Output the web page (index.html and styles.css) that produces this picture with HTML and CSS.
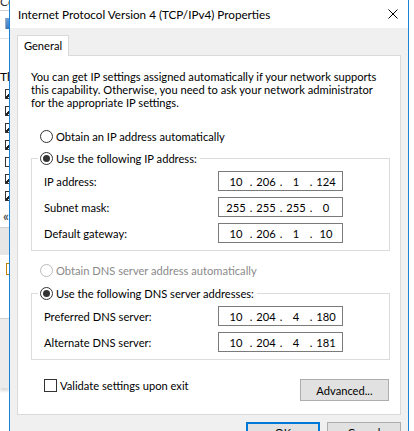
FILE: index.html
```html
<!DOCTYPE html>
<html>
<head>
<meta charset="utf-8">
<link rel="stylesheet" href="styles.css">
</head>
<body>
<div class="screen">
  <div class="bgwin">
    <div class="bw-top">Co</div>
    <div class="bw-line"></div>
    <div class="bw-icon"></div>
    <div class="bw-line2"></div>
    <div class="bw-th">Th</div>
    <div class="bw-list">
      <span class="bw-cb on"></span>
      <span class="bw-cb on"></span>
      <span class="bw-cb on"></span>
      <span class="bw-cb on"></span>
      <span class="bw-cb"></span>
      <span class="bw-cb on"></span>
      <span class="bw-cb on"></span>
    </div>
    <div class="bw-arrow">&laquo;</div>
    <div class="bw-band"></div>
    <div class="bw-bracket"></div>
    <div class="bw-grey"></div>
  </div>

  <div class="dialog">
    <div class="titlebar">
      <span class="title">Internet Protocol Version 4 (TCP/IPv4) Properties</span>
      <svg class="close" width="10" height="10" viewBox="0 0 10 10"><path d="M0.5 0.5L9.5 9.5M9.5 0.5L0.5 9.5" stroke="#000" stroke-width="1" fill="none"/></svg>
    </div>
    <div class="body">
      <div class="tabs"><div class="tab">General</div></div>
      <div class="panel">
        <p class="intro">You can get IP settings assigned automatically if your network supports<br>this capability. Otherwise, you need to ask your network administrator<br>for the appropriate IP settings.</p>

        <div class="opt opt-first"><span class="radio"></span><span>Obtain an IP address automatically</span></div>

        <fieldset class="group group-ip">
          <legend><span class="opt"><span class="radio on"></span><span>Use the following IP address:</span></span></legend>
          <div class="field"><span>IP address:</span>
            <div class="ip"><span>10</span><i>.</i><span>206</span><i>.</i><span>1</span><i>.</i><span>124</span></div></div>
          <div class="field"><span>Subnet mask:</span>
            <div class="ip"><span>255</span><i>.</i><span>255</span><i>.</i><span>255</span><i>.</i><span>0</span></div></div>
          <div class="field"><span>Default gateway:</span>
            <div class="ip"><span>10</span><i>.</i><span>206</span><i>.</i><span>1</span><i>.</i><span>10</span></div></div>
        </fieldset>

        <div class="opt opt-disabled"><span class="radio"></span><span>Obtain DNS server address automatically</span></div>

        <fieldset class="group group-dns">
          <legend><span class="opt"><span class="radio on"></span><span>Use the following DNS server addresses:</span></span></legend>
          <div class="field"><span>Preferred DNS server:</span>
            <div class="ip"><span>10</span><i>.</i><span>204</span><i>.</i><span>4</span><i>.</i><span>180</span></div></div>
          <div class="field"><span>Alternate DNS server:</span>
            <div class="ip"><span>10</span><i>.</i><span>204</span><i>.</i><span>4</span><i>.</i><span>181</span></div></div>
        </fieldset>

        <div class="bottom">
          <div class="opt check"><span class="checkbox"></span><span>Validate settings upon exit</span></div>
          <button class="btn adv">Advanced...</button>
        </div>
      </div>
      <div class="buttons">
        <button class="btn default">OK</button>
        <button class="btn">Cancel</button>
      </div>
    </div>
  </div>

  <div class="bgright"></div>
</div>
</body>
</html>
```

FILE: styles.css
```css
* { box-sizing: border-box; }
html, body { margin: 0; padding: 0; }
body {
  width: 414px;
  height: 431px;
  overflow: hidden;
  background: #ffffff;
  font-family: Lato, "Liberation Sans", sans-serif;
  font-size: 11.15px;
  color: #000;
}
.screen { display: flex; height: 431px; overflow: hidden; }

/* background window strip */
.bgwin {
  width: 9px;
  flex: none;
  background: #fff;
  display: flex;
  flex-direction: column;
  overflow: hidden;
}
.bgwin > * { flex: none; }
.bw-top { height: 8px; line-height: 4px; font-size: 12px; overflow: hidden; color: #333; }
.bw-line { height: 1px; background: #d0d0d0; margin-top: 2px; }
.bw-icon { width: 4px; height: 11px; margin: 7px 0 0 5px; background: linear-gradient(#6fa0d8, #3b78c0); border-left: 1px solid #9ab; }
.bw-line2 { height: 1px; background: #e4e4e4; margin-top: 9px; }
.bw-th { margin-top: 32px; height: 12px; line-height: 12px; font-size: 12px; color: #000; white-space: nowrap; }
.bw-list { display: flex; flex-direction: column; gap: 7px; margin-top: 6px; padding-left: 5px; }
.bw-cb { width: 10px; height: 10px; border: 1px solid #333; background: #fff; }
.bw-cb.on { background: linear-gradient(135deg, #fff 40%, #222 40%, #222 60%, #fff 60%); }
.bw-arrow { margin-top: 9px; padding-left: 3px; height: 12px; line-height: 12px; font-size: 13px; font-weight: bold; color: #555; }
.bw-band { margin-top: 5px; height: 28px; background: #e6e6e6; border-top: 1px solid #cfcfcf; }
.bw-bracket { margin: 8px 0 0 6px; width: 3px; height: 12px; border: 1px solid #c08000; border-right: none; }
.bw-grey { margin-top: 43px; height: 70px; background: #ececec; border-top: 1px solid #cfcfcf; box-shadow: 0 3px 3px rgba(0,0,0,0.15); }

/* dialog */
.dialog {
  width: 400px;
  flex: none;
  border-left: 1px solid #1883d7;
  border-right: 1px solid #1883d7;
  background: #f0f0f0;
  display: flex;
  flex-direction: column;
}
.dialog > * { flex: none; }
.titlebar {
  height: 28px;
  background: #fff;
  display: flex;
  align-items: center;
  padding: 0 10px 0 8px;
}
.title { flex: 1; font-size: 11.7px; white-space: nowrap; }
.close { flex: none; display: block; }

.body { padding: 7px 7px 0 7px; }
.tabs { display: flex; height: 20px; }
.tab {
  width: 52px;
  height: 21px;
  background: #fff;
  border: 1px solid #d9d9d9;
  border-bottom: none;
  text-align: center;
  line-height: 19px;
  position: relative;
  z-index: 1;
}
.panel {
  background: #fff;
  border: 1px solid #d9d9d9;
  padding: 14px 10px 13px 13px;
  display: flex;
  flex-direction: column;
}
.panel > * { flex: none; }
.intro { margin: 0; line-height: 13px; white-space: nowrap; }

.opt { display: flex; align-items: center; height: 13px; gap: 3px; white-space: nowrap; }
.opt-first { margin: 21px 0 0 9px; }
.opt-disabled { margin: 13px 0 0 9px; color: #8a8a8a; }
.opt-disabled .radio { border-color: #bcbcbc; }

.radio {
  width: 13px;
  height: 13px;
  border: 1px solid #333;
  border-radius: 50%;
  background: #fff;
  flex: none;
  display: flex;
  align-items: center;
  justify-content: center;
}
.radio.on::after {
  content: "";
  width: 7px;
  height: 7px;
  border-radius: 50%;
  background: #333;
}
.checkbox {
  width: 13px;
  height: 13px;
  border: 1px solid #333;
  background: #fff;
  flex: none;
}

.group {
  margin: 0;
  border: 1px solid #dcdcdc;
  padding: 6px 0 7px 6px;
  min-width: 0;
  display: flex;
  flex-direction: column;
  gap: 6px;
}
.group-ip { margin-top: 9px; }
.group-dns { margin-top: 10px; }
.group legend { padding: 0 3px 0 2px; background: #fff; }

.field {
  display: grid;
  grid-template-columns: 174px 125px;
  align-items: center;
  margin-left: 6px;
  height: 20px;
}
.ip {
  width: 125px;
  height: 20px;
  border: 1px solid #7a7a7a;
  background: #fff;
  display: flex;
  align-items: center;
  padding-left: 6px;
}
.ip span { width: 22px; text-align: center; }
.ip i { width: 8px; text-align: center; font-style: normal; }

.bottom {
  display: flex;
  justify-content: space-between;
  align-items: flex-start;
  margin-top: 19px;
}
.check { margin-left: 13px; }

.btn {
  font-family: inherit;
  font-size: 11.15px;
  color: #000;
  background: #e1e1e1;
  border: 1px solid #adadad;
  padding: 0;
  margin: 0;
}
.adv { width: 89px; height: 22px; margin-right: 1px; }

.buttons {
  display: flex;
  justify-content: flex-end;
  gap: 7px;
  margin-top: 7px;
  padding-right: 0;
}
.buttons .btn { width: 74px; height: 23px; padding-bottom: 3px; }
.btn.default { border: 2px solid #0078d7; }

.bgright { flex: 1; background: #fff; }
```
